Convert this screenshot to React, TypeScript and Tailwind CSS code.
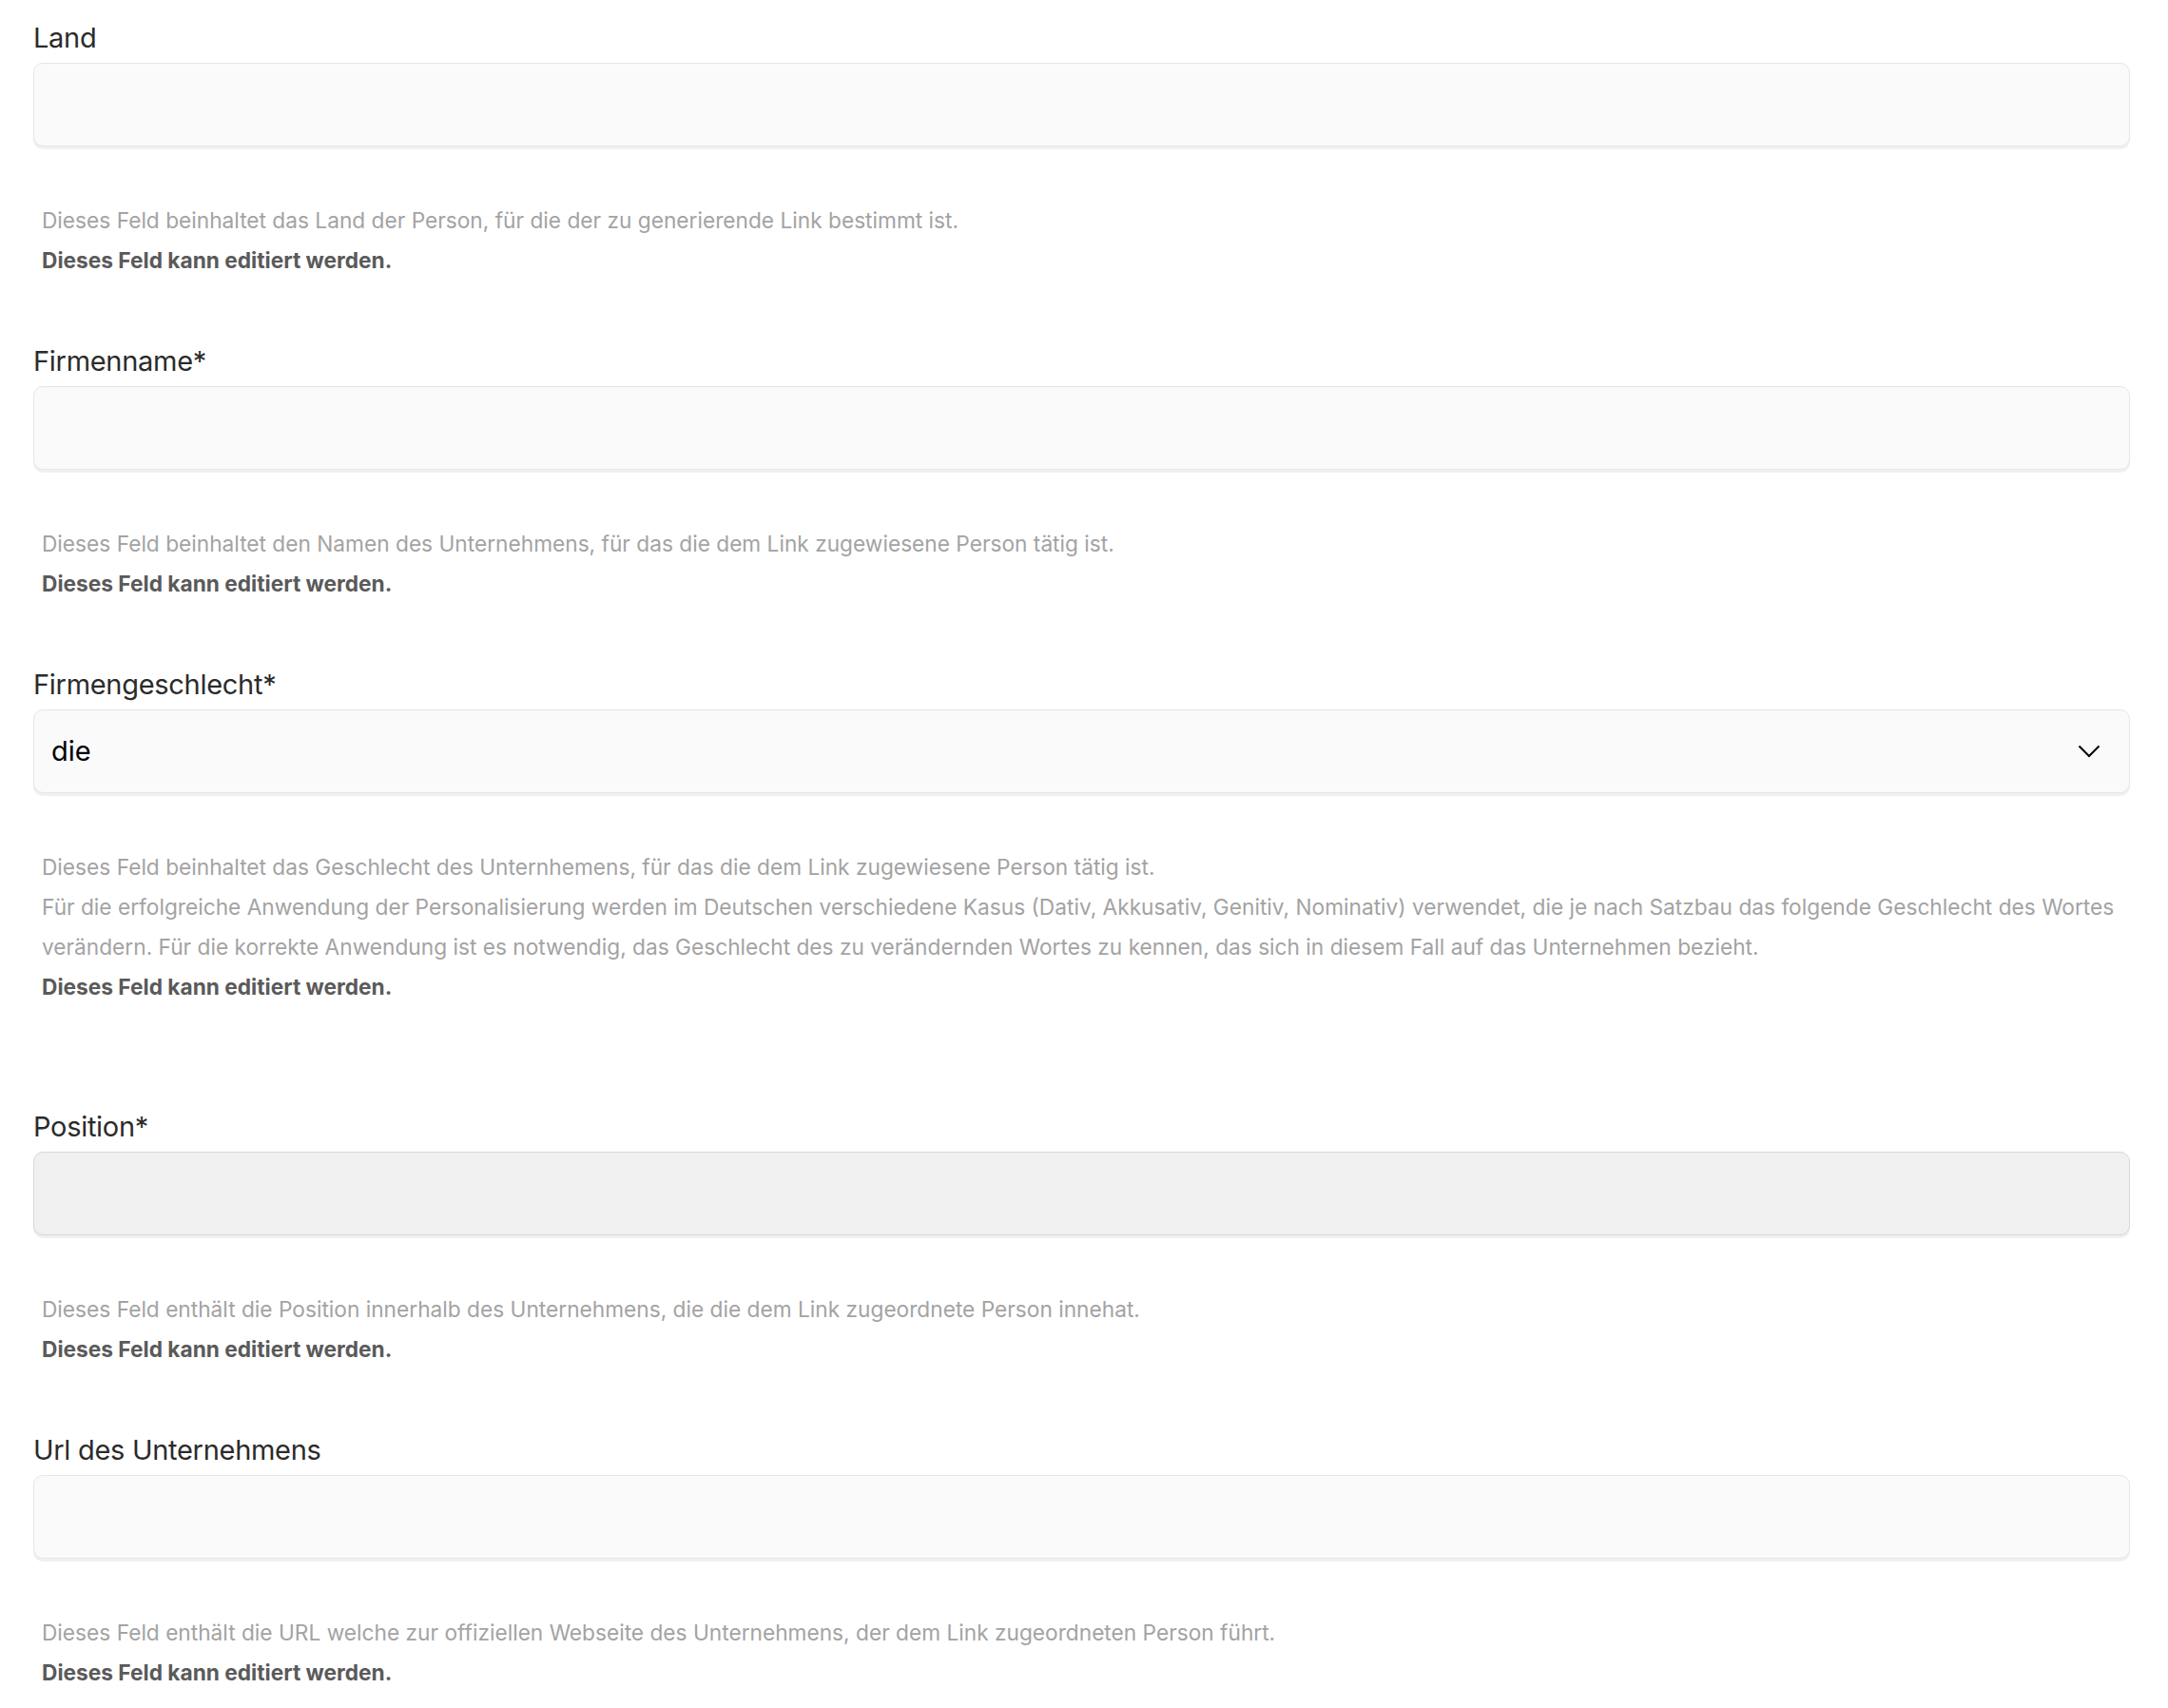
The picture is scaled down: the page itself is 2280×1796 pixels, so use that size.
import { type FC, type ReactNode } from 'react'

type Field = {
  label: string
  kind: 'input' | 'select' | 'disabled'
  value?: string
  help: ReactNode
  extraSpace?: boolean
}

const FIELDS: Array<Field> = [
  {
    label: 'Land',
    kind: 'input',
    help: (
      <p>
        Dieses Feld beinhaltet das Land der Person, für die der zu generierende Link bestimmt ist.
      </p>
    ),
  },
  {
    label: 'Firmenname*',
    kind: 'input',
    help: (
      <p>
        Dieses Feld beinhaltet den Namen des Unternehmens, für das die dem Link zugewiesene Person
        tätig ist.
      </p>
    ),
  },
  {
    label: 'Firmengeschlecht*',
    kind: 'select',
    value: 'die',
    extraSpace: true,
    help: (
      <>
        <p>
          Dieses Feld beinhaltet das Geschlecht des Unternhemens, für das die dem Link zugewiesene
          Person tätig ist.
        </p>
        <p>
          <span className="block whitespace-nowrap">
            Für die erfolgreiche Anwendung der Personalisierung werden im Deutschen verschiedene
            Kasus (Dativ, Akkusativ, Genitiv, Nominativ) verwendet, die je nach Satzbau das folgende
            Geschlecht des Wortes
          </span>
          <span className="block">
            verändern. Für die korrekte Anwendung ist es notwendig, das Geschlecht des zu
            verändernden Wortes zu kennen, das sich in diesem Fall auf das Unternehmen bezieht.
          </span>
        </p>
      </>
    ),
  },
  {
    label: 'Position*',
    kind: 'disabled',
    help: (
      <p>
        Dieses Feld enthält die Position innerhalb des Unternehmens, die die dem Link zugeordnete
        Person innehat.
      </p>
    ),
  },
  {
    label: 'Url des Unternehmens',
    kind: 'input',
    help: (
      <p>
        Dieses Feld enthält die URL welche zur offiziellen Webseite des Unternehmens, der dem Link
        zugeordneten Person führt.
      </p>
    ),
  },
]

const Chevron: FC = () => (
  <svg width="24" height="14" viewBox="0 0 24 14" fill="none" className="text-black">
    <path d="M1.5 1.5L12 12L22.5 1.5" stroke="currentColor" strokeWidth="2" />
  </svg>
)

const FieldBlock: FC<{ field: Field }> = ({ field }) => {
  const box =
    'flex h-[88px] w-full items-center rounded-[10px] border shadow-[0_3px_0_0_#f0f0f0] px-[18px]'
  return (
    <div className={field.extraSpace ? 'mb-[106px]' : 'mb-[65px]'}>
      <label className="block text-[29px] leading-[40px] text-[#2b2b2b] tracking-[-0.01em]">
        {field.label}
      </label>
      {field.kind === 'select' ? (
        <div className={`${box} mt-[6px] justify-between border-[#e6e6e6] bg-[#fafafa] pr-[30px]`}>
          <span className="text-[29px] text-black">{field.value}</span>
          <Chevron />
        </div>
      ) : field.kind === 'disabled' ? (
        <div className={`${box} mt-[6px] border-[#d8d8d8] bg-[#f0f0f0]`} />
      ) : (
        <div className={`${box} mt-[6px] border-[#e6e6e6] bg-[#fafafa]`} />
      )}
      <div className="mt-[57px] pl-[9px] text-[22.7px] leading-[42px] text-[#a3a3a3]">
        {field.help}
        <p className="font-bold text-[#5a5a5a]">Dieses Feld kann editiert werden.</p>
      </div>
    </div>
  )
}

const App: FC = () => {
  return (
    <div className="min-h-screen bg-white px-[35px] pt-[20px] font-['Inter',sans-serif] w-[2275px]">
      {FIELDS.map((field, index) => (
        <FieldBlock field={field} key={index} />
      ))}
    </div>
  )
}

export default App
